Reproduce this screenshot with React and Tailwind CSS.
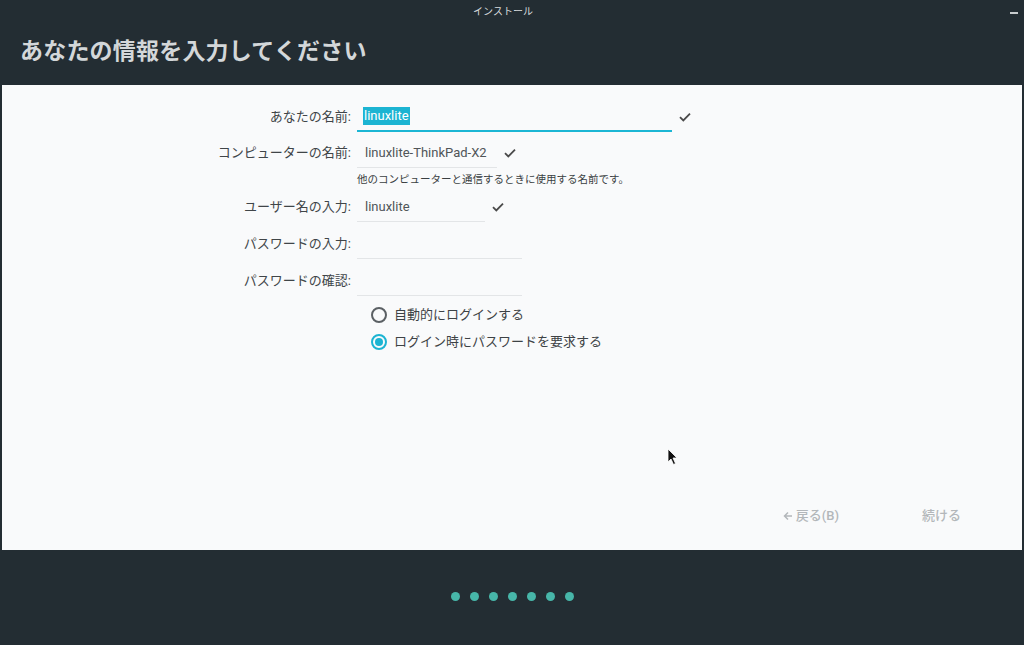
import React from 'react'

const font = { fontFamily: 'Roboto, "Noto Sans CJK JP", sans-serif' }

const Check = () => (
    <svg width="12" height="10" viewBox="0 0 12 10" className="text-[#4a4a4a]">
        <path d="M1 5.2 L4.3 8.4 L11 1.6" fill="none" stroke="currentColor" strokeWidth="1.8" />
    </svg>
)

const Row = ({label, width, value, selected, active, check, checkGap, h}) => (
    <div className={`flex items-center ${h}`}>
        <div className="w-[355px] pr-[6px] text-right text-[13px] text-[#404548]">{label}</div>
        <div className={`h-[30px] flex items-center pl-[6px] ${width} ${active ? 'border-b-2 border-[#1cb6d4]' : 'border-b border-[#e3e5e7]'}`}>
            {value && (
                <span className={`text-[13px] ${selected ? 'bg-[#1cb4d2] text-white px-[1px] leading-[18px]' : 'text-[#505558] pl-[2px]'}`}>{value}</span>
            )}
        </div>
        {check && <div className={`${checkGap} flex items-center`}><Check /></div>}
    </div>
)

const Radio = ({checked, label}) => (
    <div className="flex items-center h-[27px] pl-[369px]">
        <div className={`w-[16px] h-[16px] rounded-full border-2 flex items-center justify-center ${checked ? 'border-[#1cb4d2]' : 'border-[#5b6064]'}`}>
            {checked && <div className="w-[8px] h-[8px] rounded-full bg-[#1cb4d2]" />}
        </div>
        <span className="ml-[7px] text-[13px] text-[#3d4245]">{label}</span>
    </div>
)

export default function App() {
    return (
        <div style={font} className="w-[1024px] h-[645px] bg-[#232d33] flex flex-col overflow-hidden relative">
            <div className="h-[23px] flex items-center justify-center pr-[18px] relative">
                <span className="text-[10px] text-[#d8dcde]">インストール</span>
                <div className="absolute right-[6px] top-[12px] w-[8px] h-[2px] bg-[#c8ccce]" />
            </div>
            <div className="h-[62px] flex items-center pl-[20px] pb-[4px]">
                <h1 className="text-[23px] font-bold text-[#d3d7d9] tracking-[0.2px]">あなたの情報を入力してください</h1>
            </div>
            <div className="mx-[2px] h-[465px] bg-[#f9fafb] flex flex-col pt-[14px]">
                <Row label="あなたの名前:" width="w-[315px]" value="linuxlite" selected active check checkGap="ml-[7px]" h="h-[36px]" />
                <Row label="コンピューターの名前:" width="w-[140px]" value="linuxlite-ThinkPad-X2" check checkGap="ml-[7px]" h="h-[36px]" />
                <div className="h-[18px] flex items-center pl-[355px] text-[10.5px] text-[#3a3f42]">
                    他のコンピューターと通信するときに使用する名前です。
                </div>
                <Row label="ユーザー名の入力:" width="w-[128px]" value="linuxlite" check checkGap="ml-[7px]" h="h-[36px]" />
                <Row label="パスワードの入力:" width="w-[165px]" h="h-[37px]" />
                <Row label="パスワードの確認:" width="w-[165px]" h="h-[37px]" />
                <div className="pt-[2px]">
                    <Radio label="自動的にログインする" />
                    <Radio checked label="ログイン時にパスワードを要求する" />
                </div>
                <div className="flex-1" />
                <div className="flex justify-end items-center h-[20px] mb-[24px] pr-[61px] text-[13px] font-medium text-[#b3b7ba]">
                    <span className="flex items-center">
                        <svg width="10" height="10" viewBox="0 0 10 10" className="mr-[3px]">
                            <path d="M9 5 H1.5 M5 1.5 L1.5 5 L5 8.5" fill="none" stroke="currentColor" strokeWidth="1.5" />
                        </svg>
                        戻る(B)
                    </span>
                    <span className="ml-[83px]">続ける</span>
                </div>
            </div>
            <div className="flex-1 flex items-center justify-center gap-[10px] pb-[2px]">
                {[0, 1, 2, 3, 4, 5, 6].map(i => (
                    <div key={i} className="w-[9px] h-[9px] rounded-full bg-[#47b6a9]" />
                ))}
            </div>
            <svg className="absolute left-[667px] top-[448px]" width="12" height="18" viewBox="0 0 12 18">
                <path d="M1 1 L1 14 L4 11 L6.5 16.5 L8.5 15.5 L6 10 L10 10 Z" fill="#111" stroke="#fff" strokeWidth="0.8" />
            </svg>
        </div>
    )
}
